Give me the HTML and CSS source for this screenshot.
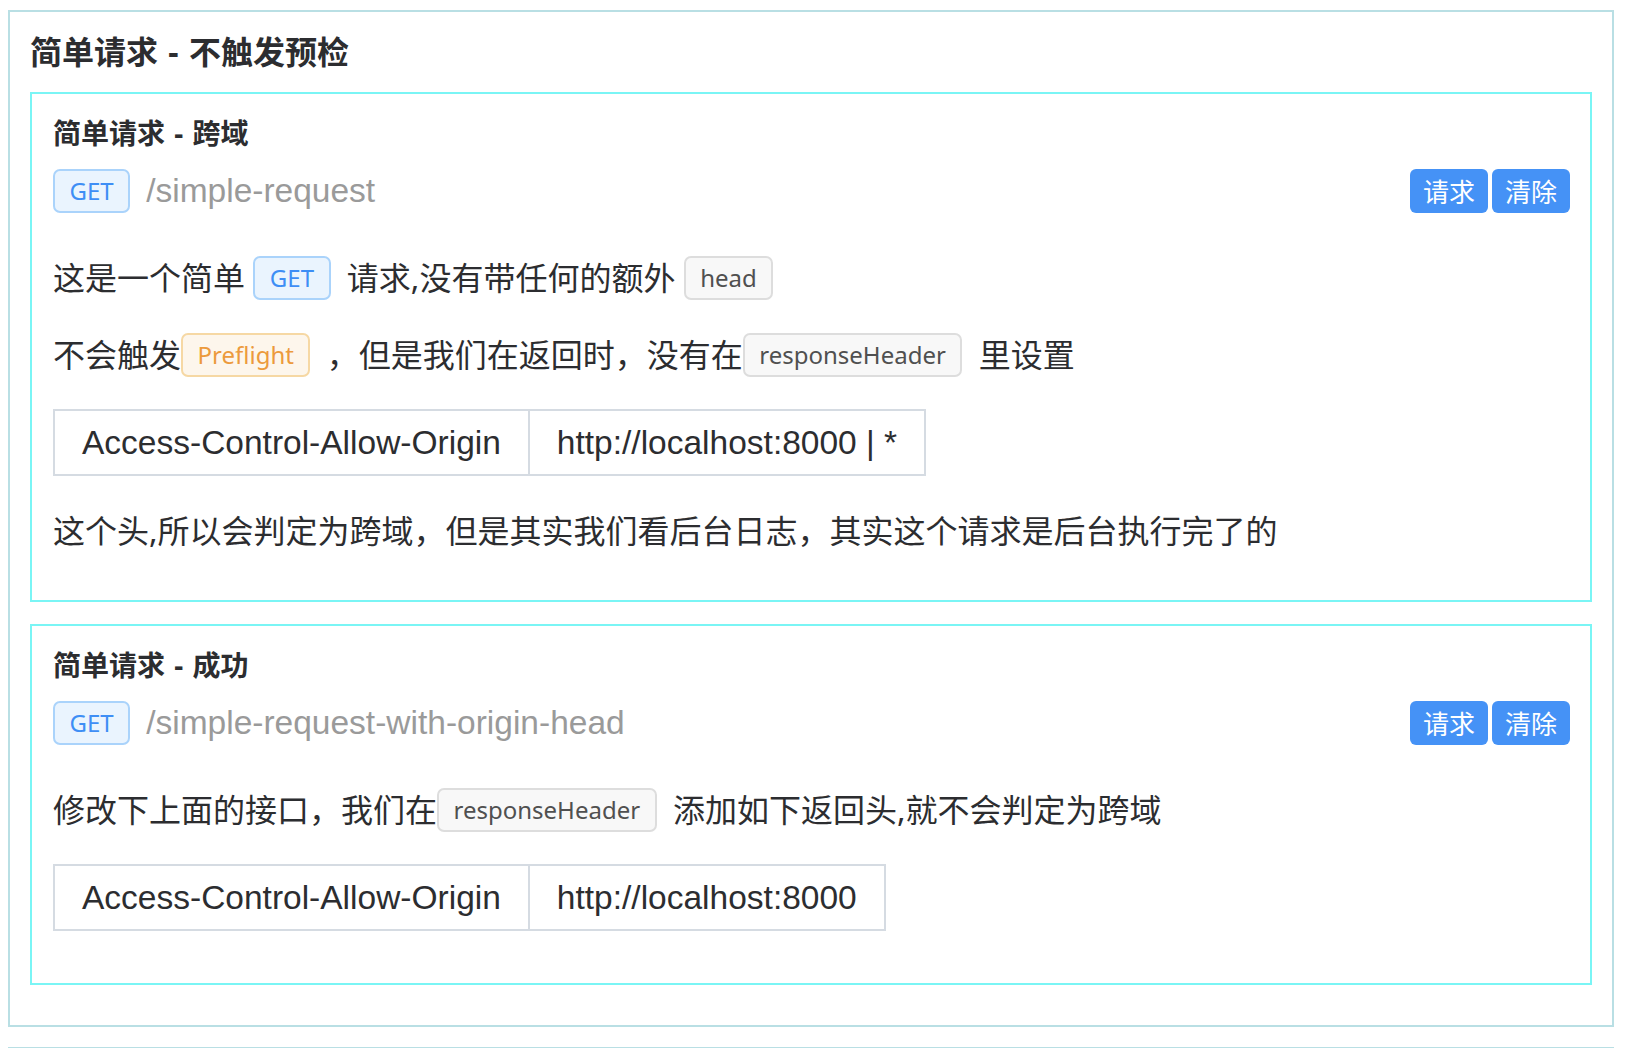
FILE: index.html
```html
<!DOCTYPE html>
<html lang="zh-CN">
<head>
<meta charset="utf-8">
<title>简单请求 - 不触发预检</title>
<link rel="stylesheet" href="styles.css">
</head>
<body>
<section class="group">
  <h2 class="group-title">简单请求 - 不触发预检</h2>

  <div class="case">
    <h3 class="case-title">简单请求 - 跨域</h3>
    <div class="req">
      <span class="tag tag-get">GET</span>
      <span class="url">/simple-request</span>
      <div class="actions">
        <button class="btn">请求</button>
        <button class="btn">清除</button>
      </div>
    </div>
    <p class="note">这是一个简单 <span class="tag tag-get">GET</span> 请求,没有带任何的额外 <span class="tag tag-plain">head</span></p>
    <p class="note">不会触发<span class="tag tag-warn">Preflight</span> ，但是我们在返回时，没有在<span class="tag tag-plain">responseHeader</span> 里设置</p>
    <table class="hdr">
      <tr><td>Access-Control-Allow-Origin</td><td>http://localhost:8000 | *</td></tr>
    </table>
    <p class="note note-end">这个头,所以会判定为跨域，但是其实我们看后台日志，其实这个请求是后台执行完了的</p>
  </div>

  <div class="case">
    <h3 class="case-title">简单请求 - 成功</h3>
    <div class="req">
      <span class="tag tag-get">GET</span>
      <span class="url">/simple-request-with-origin-head</span>
      <div class="actions">
        <button class="btn">请求</button>
        <button class="btn">清除</button>
      </div>
    </div>
    <p class="note">修改下上面的接口，我们在<span class="tag tag-plain">responseHeader</span> 添加如下返回头,就不会判定为跨域</p>
    <table class="hdr">
      <tr><td>Access-Control-Allow-Origin</td><td>http://localhost:8000</td></tr>
    </table>
  </div>
</section>

<section class="group group-next">
  <h2 class="group-title">&nbsp;</h2>
</section>
</body>
</html>
```

FILE: styles.css
```css
html {
  overflow: hidden;
}

body {
  margin: 0;
  padding: 10px 12px 0 8px;
  background: #ffffff;
  color: #2c2d30;
  font-family: "Noto Sans", "Noto Sans CJK SC", sans-serif;
}

.group {
  border: 2px solid #b9dfe4;
  padding: 20px 20px 40px;
  margin-bottom: 20px;
}

.group-title {
  margin: 0 0 20px;
  font-size: 32px;
  line-height: 40px;
  font-weight: 700;
  word-spacing: 2px;
}

.case {
  border: 2px solid #7af5f5;
  padding: 20px 20px 20px 21px;
  margin-bottom: 22px;
}

.case:last-child {
  margin-bottom: 0;
}

.case-title {
  margin: 0 0 17px;
  font-size: 28px;
  line-height: 38px;
  font-weight: 700;
  word-spacing: 2px;
}

.req {
  display: flex;
  align-items: center;
  margin-bottom: 42px;
}

.req .tag {
  margin-top: 0;
}

.url {
  flex: 1;
  margin-left: 8px;
  font-family: "Liberation Sans", "Noto Sans", sans-serif;
  font-size: 33.5px;
  line-height: 44px;
  color: #9a9a9a;
}

.actions {
  display: flex;
  gap: 4px;
}

.btn {
  height: 44px;
  padding: 0 13px;
  border: none;
  border-radius: 6px;
  background: #4592f6;
  color: #ffffff;
  font-family: "Noto Sans CJK SC", sans-serif;
  font-size: 26px;
  line-height: 44px;
}

.note {
  margin: 32px 0;
  font-size: 32px;
  line-height: 45px;
}

.note-end {
  margin-bottom: 27px;
}

.tag {
  display: inline-block;
  box-sizing: border-box;
  height: 44px;
  margin: 1px 8px 0 0;
  padding: 0 14.5px;
  border: 2px solid;
  border-radius: 7px;
  font-family: "Noto Sans", sans-serif;
  font-size: 24px;
  line-height: 40px;
  vertical-align: top;
}

.tag-get {
  background: #eaf4fe;
  border-color: #aad3fb;
  color: #3e8ef5;
}

.tag-plain {
  background: #f8f8f8;
  border-color: #dddddd;
  color: #505050;
}

.tag-warn {
  background: #fdf6ec;
  border-color: #f6d8a4;
  color: #ec9a3c;
}

.hdr {
  border-collapse: collapse;
  margin: 32px 0;
  font-family: "Liberation Sans", "Noto Sans", sans-serif;
  font-size: 33.5px;
}

.hdr td {
  height: 63px;
  padding: 0 27px;
  border: 2px solid #d5dbe2;
  line-height: 44px;
  white-space: nowrap;
}

.group-next {
  height: 400px;
}
```
